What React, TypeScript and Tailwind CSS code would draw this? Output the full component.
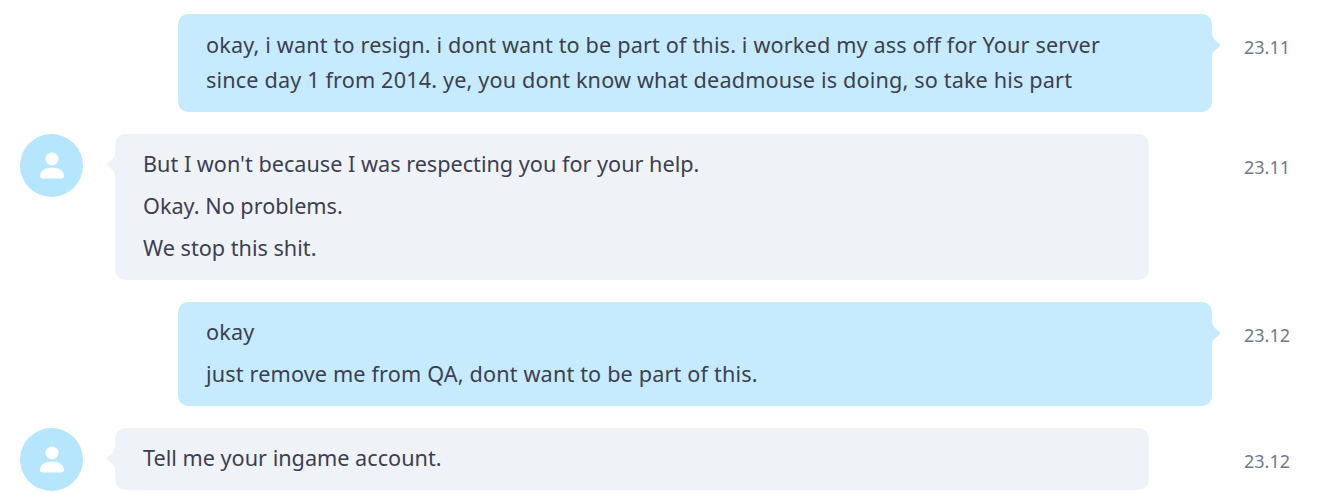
function Tail({ side }: { side: "left" | "right" }) {
  if (side === "right") {
    return (
      <svg className="absolute left-full top-[19px] text-[#c7ebfe]" width="10" height="24" viewBox="0 0 10 24" fill="currentColor">
        <path d="M0 0C0 5 3 7 7 10.500C9 12 9 12.500 7 14C3 17.500 0 19 0 24Z" />
      </svg>
    );
  }
  return (
    <svg className="absolute right-full top-[18px] text-[#eff3f8]" width="10" height="24" viewBox="0 0 10 24" fill="currentColor">
      <path d="M10 0C10 5 7 7 3 10.500C1 12 1 12.500 3 14C7 17.500 10 19 10 24Z" />
    </svg>
  );
}

function Avatar() {
  return (
    <div className="flex h-[63px] w-[63px] shrink-0 items-center justify-center rounded-full bg-[#b5e6fd]">
      <svg width="26" height="28" viewBox="0 0 26 28" fill="#ffffff">
        <circle cx="13" cy="7" r="6.500" />
        <path d="M1 24C1 19 6 15.500 13 15.500C20 15.500 25 19 25 24C25 25.500 24 26.500 22.500 26.500H3.500C2 26.500 1 25.500 1 24Z" />
      </svg>
    </div>
  );
}

function Time({ value }: { value: string }) {
  return <span className="mt-[21px] block text-[18px] leading-[24px] text-[#6d7a90]">{value}</span>;
}

function Lines({ lines }: { lines: string[] }) {
  return (
    <>
      {lines.map((line, i) => (
        <p key={i} className="mt-[7px] first:mt-0 text-[21.650px] leading-[35px]">{line}</p>
      ))}
    </>
  );
}

function Outgoing({ lines, time, top }: { lines: string[]; time: string; top: string }) {
  return (
    <div className="flex items-start pl-[178px]">
      <div className={`relative w-[1034px] rounded-[10px] bg-[#c7ebfe] pb-[15px] pl-[28px] pr-[100px] tracking-[0.15px] ${top}`}>
        <Lines lines={lines} />
        <Tail side="right" />
      </div>
      <div className="ml-[32px]"><Time value={time} /></div>
    </div>
  );
}

function Incoming({ lines, time }: { lines: string[]; time: string }) {
  return (
    <div className="flex items-start pl-[20px]">
      <Avatar />
      <div className="relative ml-[32px] w-[1034px] rounded-[10px] bg-[#eff3f8] px-[28px] pb-[15px] pt-[12px]">
        <Lines lines={lines} />
        <Tail side="left" />
      </div>
      <div className="ml-[95px]"><Time value={time} /></div>
    </div>
  );
}

export default function App() {
  return (
    <div className="flex h-[494px] w-[1328px] flex-col gap-[22px] overflow-hidden bg-white pt-[14px] font-['Noto_Sans',sans-serif] text-[#3c3f52]">
      <Outgoing
        top="pt-[13px]"
        lines={["okay, i want to resign. i dont want to be part of this. i worked my ass off for Your server since day 1 from 2014. ye, you dont know what deadmouse is doing, so take his part"]}
        time="23.11"
      />
      <Incoming
        lines={["But I won't because I was respecting you for your help.", "Okay. No problems.", "We stop this shit."]}
        time="23.11"
      />
      <Outgoing
        top="pt-[12px]"
        lines={["okay", "just remove me from QA, dont want to be part of this."]}
        time="23.12"
      />
      <Incoming lines={["Tell me your ingame account."]} time="23.12" />
    </div>
  );
}
